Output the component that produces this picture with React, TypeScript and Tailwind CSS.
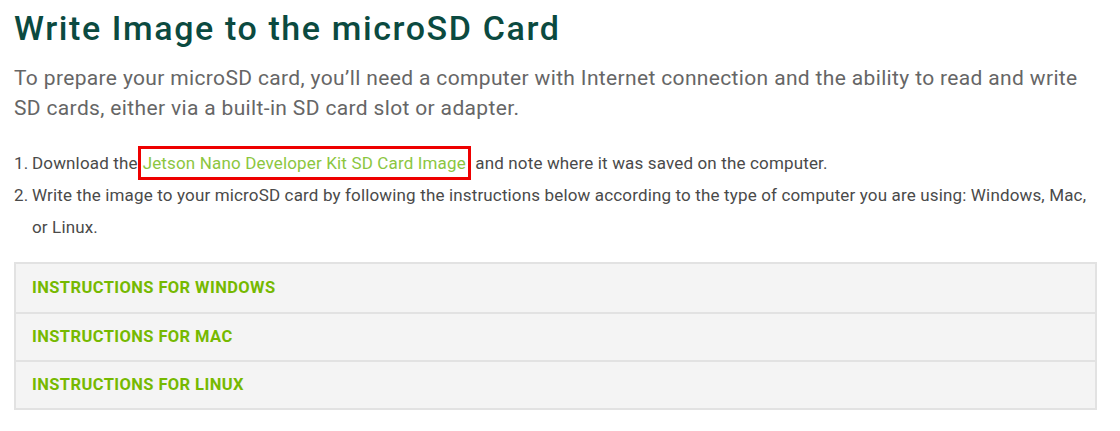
import React from "react";

const font = { fontFamily: "Roboto, 'Open Sans', Arial, sans-serif" };

export default function App() {
  const items = ["INSTRUCTIONS FOR WINDOWS", "INSTRUCTIONS FOR MAC", "INSTRUCTIONS FOR LINUX"];
  return (
    <div className="bg-white w-[1120px] h-[431px] pl-[14px] pt-[6px]" style={font}>
      <h1 className="text-[34px] leading-[44px] text-[#0b4a40] font-medium tracking-[1.6px]">
        Write Image to the microSD Card
      </h1>
      <p className="mt-[13px] text-[21px] leading-[30px] text-[#666] tracking-[0.35px] w-[1085px]">
        To prepare your microSD card, you’ll need a computer with Internet connection and the ability to read and write SD cards, either via a built-in SD card slot or adapter.
      </p>
      <ol className="mt-[24px] text-[17px] leading-[32px] text-[#4a4a4a] tracking-[0.15px] w-[1090px]">
        <li className="flex h-[32px]">
          <span className="w-[18px] shrink-0">1.</span>
          <span>
            Download the
            <span className="inline-block border-[3px] border-[#e00] leading-[28px] px-[2px] text-[#8cc63f] -my-[3px]">
              Jetson Nano Developer Kit SD Card Image
            </span>{" "}
            and note where it was saved on the computer.
          </span>
        </li>
        <li className="flex">
          <span className="w-[18px] shrink-0">2.</span>
          <span>
            Write the image to your microSD card by following the instructions below according to the type of computer you are using: Windows, Mac, or Linux.
          </span>
        </li>
      </ol>
      <div className="mt-[19px] w-[1083px] border-2 border-[#e2e2e2] bg-[#f4f4f4]">
        {items.map((t, i) => (
          <div
            key={t}
            className={`h-[48px] flex items-center pl-[16px] text-[16.5px] font-bold text-[#76b900] tracking-[0.4px] ${i > 0 ? "border-t-2 border-[#e2e2e2]" : ""}`}
          >
            {t}
          </div>
        ))}
      </div>
    </div>
  );
}
